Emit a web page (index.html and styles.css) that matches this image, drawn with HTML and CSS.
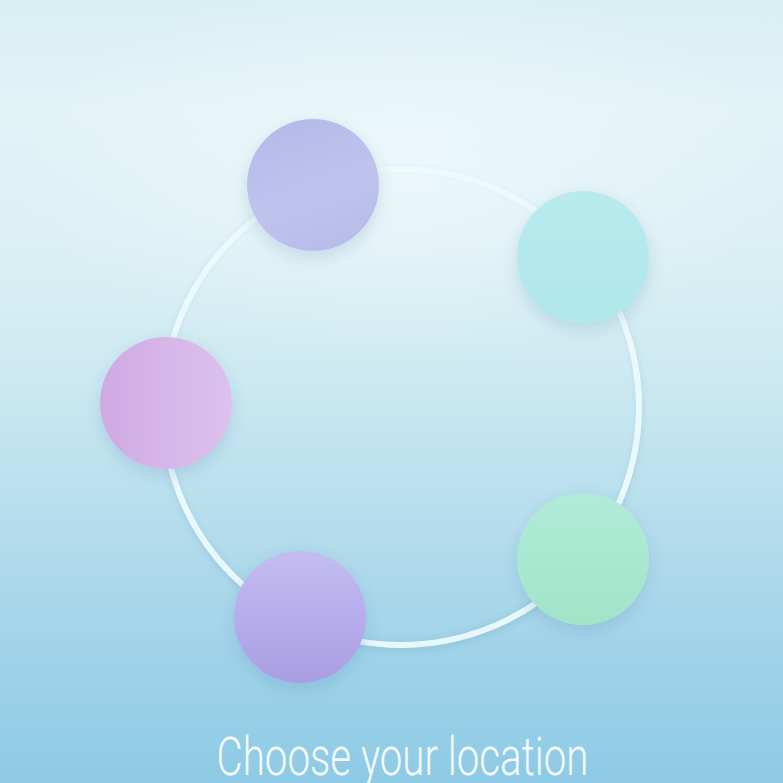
FILE: index.html
```html
<!DOCTYPE html>
<html lang="en">
<head>
<meta charset="utf-8">
<title>Choose your location</title>
<link rel="stylesheet" href="styles.css">
</head>
<body>
<main class="screen">
  <section class="orbit" aria-label="Locations">
    <div class="ring"></div>
    <button class="dot dot-1" aria-label="Location 1"></button>
    <button class="dot dot-2" aria-label="Location 2"></button>
    <button class="dot dot-3" aria-label="Location 3"></button>
    <button class="dot dot-4" aria-label="Location 4"></button>
    <button class="dot dot-5" aria-label="Location 5"></button>
  </section>
  <h1 class="title"><span class="title-text">Choose your location</span></h1>
</main>
</body>
</html>
```
FILE: styles.css
```css
html, body {
  margin: 0;
  padding: 0;
  width: 783px;
  height: 783px;
  overflow: hidden;
}

.screen {
  width: 783px;
  height: 783px;
  display: flex;
  flex-direction: column;
  align-items: center;
  background:
    radial-gradient(ellipse 520px 260px at 400px 170px, rgba(246, 252, 253, 0.55), rgba(246, 252, 253, 0) 75%),
    linear-gradient(180deg, #d9eff4 0%, #e2f3f6 14%, #dcf0f4 30%, #cde9f1 48%, #b4dcec 68%, #9ed2e8 85%, #8ecae5 100%);
  overflow: hidden;
}

.orbit {
  position: relative;
  width: 783px;
  height: 730px;
  flex: none;
}

.ring {
  position: absolute;
  left: 160px;
  top: 166px;
  width: 470px;
  height: 470px;
  border: 6px solid rgba(236, 250, 251, 0.95);
  border-radius: 50%;
  box-shadow: 0 3px 6px rgba(100, 160, 195, 0.25), inset 0 -2px 5px rgba(100, 160, 195, 0.15);
}

.dot {
  position: absolute;
  width: 132px;
  height: 132px;
  padding: 0;
  border: none;
  border-radius: 50%;
  box-shadow: 0 6px 16px rgba(90, 130, 180, 0.22);
  cursor: pointer;
}

.dot-1 {
  left: 247px;
  top: 119px;
  background: linear-gradient(160deg, #b3b8e8 0%, #bfc3ed 55%, #b6bae9 100%);
}

.dot-2 {
  left: 517px;
  top: 191px;
  background: linear-gradient(180deg, #b7ebee 0%, #b0e7eb 100%);
}

.dot-3 {
  left: 100px;
  top: 337px;
  background: linear-gradient(90deg, #cfa9e3 0%, #d8b8ea 60%, #dcc1ee 100%);
}

.dot-4 {
  left: 517px;
  top: 493px;
  background: linear-gradient(180deg, #b1ebd7 0%, #a8e8d0 50%, #a2e4c8 100%);
}

.dot-5 {
  left: 234px;
  top: 551px;
  background: linear-gradient(180deg, #c3bdef 0%, #b7aceb 50%, #aa9ee2 100%);
}

.title {
  margin: 0;
  flex: none;
  box-sizing: border-box;
  width: 783px;
  padding-left: 22px;
  text-align: center;
  font-family: Roboto, "Liberation Sans", sans-serif;
  font-weight: 300;
  font-size: 54px;
  line-height: 54px;
  color: #f4fbfd;
  white-space: nowrap;
}

.title-text {
  display: inline-block;
  transform: scaleX(0.745);
  transform-origin: center;
}
```
